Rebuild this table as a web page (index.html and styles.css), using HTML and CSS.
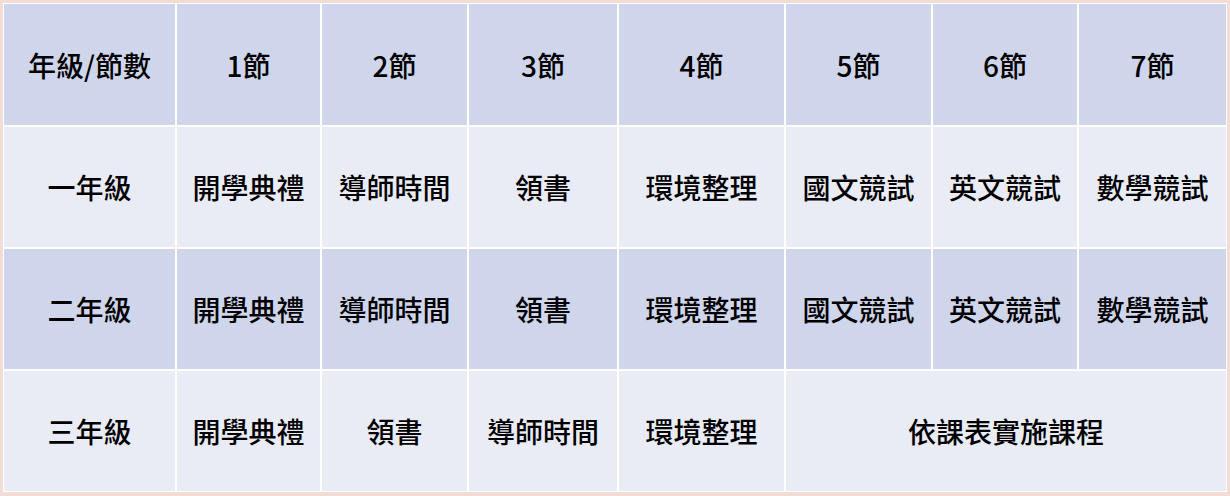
FILE: index.html
```html
<!DOCTYPE html>
<html lang="zh-Hant">
<head>
<meta charset="utf-8">
<title>課表</title>
<link rel="stylesheet" href="styles.css">
</head>
<body>
<div class="frame">
  <div class="table">
    <div class="cell head">年級/節數</div>
    <div class="cell head">1節</div>
    <div class="cell head">2節</div>
    <div class="cell head">3節</div>
    <div class="cell head">4節</div>
    <div class="cell head">5節</div>
    <div class="cell head">6節</div>
    <div class="cell head">7節</div>

    <div class="cell light">一年級</div>
    <div class="cell light">開學典禮</div>
    <div class="cell light">導師時間</div>
    <div class="cell light">領書</div>
    <div class="cell light">環境整理</div>
    <div class="cell light">國文競試</div>
    <div class="cell light">英文競試</div>
    <div class="cell light">數學競試</div>

    <div class="cell dark">二年級</div>
    <div class="cell dark">開學典禮</div>
    <div class="cell dark">導師時間</div>
    <div class="cell dark">領書</div>
    <div class="cell dark">環境整理</div>
    <div class="cell dark">國文競試</div>
    <div class="cell dark">英文競試</div>
    <div class="cell dark">數學競試</div>

    <div class="cell light">三年級</div>
    <div class="cell light">開學典禮</div>
    <div class="cell light">領書</div>
    <div class="cell light">導師時間</div>
    <div class="cell light">環境整理</div>
    <div class="cell light wide">依課表實施課程</div>
  </div>
</div>
</body>
</html>
```

FILE: styles.css
```css
html, body {
  margin: 0;
  padding: 0;
}
body {
  background: #f2ddd6;
  width: 1230px;
  height: 496px;
  overflow: hidden;
}
.frame {
  padding: 3px;
}
.table {
  display: grid;
  grid-template-columns: 171px 143px 145px 148px 165px 145px 144px 147px;
  grid-template-rows: 121px 120px 120px 120px;
  gap: 2px;
  padding: 1px;
  background: #ffffff;
  width: max-content;
}
.cell {
  display: flex;
  align-items: center;
  justify-content: center;
  font-family: "Noto Sans CJK TC", "Noto Sans", sans-serif;
  font-size: 28px;
  font-weight: 500;
  color: #000000;
  white-space: nowrap;
}
.head, .dark {
  background: #cfd5ea;
}
.light {
  background: #e9ebf5;
}
.wide {
  grid-column: 6 / 9;
}
```
